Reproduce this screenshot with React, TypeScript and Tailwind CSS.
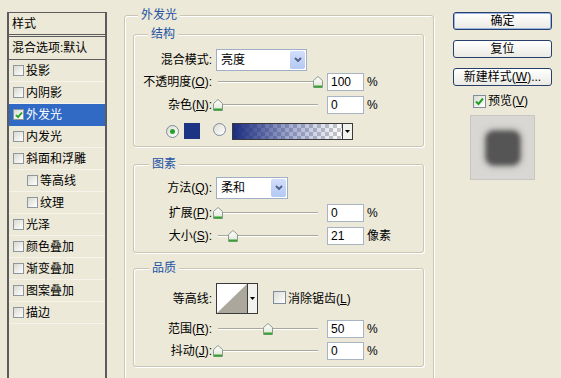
import React from "react";

function ListCheck({ checked }: { checked?: boolean }) {
  return (
    <span className="inline-flex h-[11px] w-[11px] shrink-0 items-center justify-center border border-[#8e969e] bg-gradient-to-br from-[#d9d9d2] to-white">
      {checked && (
        <svg width="8" height="8" viewBox="0 0 8 8">
          <path d="M1 4 L3 6.2 L7 1.5" fill="none" stroke="#21a121" strokeWidth="1.8" />
        </svg>
      )}
    </span>
  );
}

function Check({ checked }: { checked?: boolean }) {
  return (
    <span className="inline-flex h-[13px] w-[13px] shrink-0 items-center justify-center border border-[#7f8c99] bg-gradient-to-br from-[#dcdcd5] to-white">
      {checked && (
        <svg width="9" height="9" viewBox="0 0 9 9">
          <path d="M1 4.5 L3.5 7 L8 1.5" fill="none" stroke="#21a121" strokeWidth="2" />
        </svg>
      )}
    </span>
  );
}

function Radio({ checked }: { checked?: boolean }) {
  return (
    <span className="inline-flex h-[13px] w-[13px] shrink-0 items-center justify-center rounded-full border border-[#7f8c99] bg-gradient-to-br from-[#dcdcd5] to-white">
      {checked && <span className="h-[5px] w-[5px] rounded-full bg-[#2aa02a]" />}
    </span>
  );
}

function Thumb({ left }: { left: number }) {
  return (
    <svg
      className="absolute top-[5px]"
      style={{ left }}
      width="10"
      height="12"
      viewBox="0 0 10 12"
    >
      <defs>
        <linearGradient id="tg" x1="0" y1="0" x2="0" y2="1">
          <stop offset="0" stopColor="#ffffff" />
          <stop offset="1" stopColor="#dfe6d6" />
        </linearGradient>
      </defs>
      <path d="M0.5 11.5 V4.5 L5 0.5 L9.5 4.5 V11.5 Z" fill="url(#tg)" stroke="#8c9a8c" />
      <rect x="1" y="9.5" width="8" height="2" fill="#34a334" />
    </svg>
  );
}

function Slider({ pos }: { pos: number }) {
  return (
    <div className="relative ml-[4px] h-[22px] w-[104px] shrink-0">
      <div className="absolute left-[2px] right-[2px] top-[10px] h-[2px] border-t border-[#aaa89c] bg-white" />
      <Thumb left={pos - 3} />
    </div>
  );
}

function NumInput({ v }: { v: string }) {
  return (
    <div className="ml-[7px] flex h-[18px] w-[37px] shrink-0 items-center border border-[#a9b4c2] bg-white pl-[3px]">
      {v}
    </div>
  );
}

function Select({ text, wide }: { text: string; wide?: boolean }) {
  return (
    <div
      className={`ml-[4px] flex h-[22px] shrink-0 items-center justify-between border border-[#9fb0c4] bg-white pl-[4px] pr-[1px] ${
        wide ? "w-[91px]" : "w-[72px]"
      }`}
    >
      <span>{text}</span>
      <span className="flex h-[18px] w-[15px] items-center justify-center rounded-[2px] bg-gradient-to-b from-[#d2defb] to-[#b3c8f3]">
        <svg width="8" height="6" viewBox="0 0 8 6">
          <path d="M1 1 L4 4 L7 1" fill="none" stroke="#4d6185" strokeWidth="1.8" />
        </svg>
      </span>
    </div>
  );
}

function Label({ children }: { children: React.ReactNode }) {
  return <span className="w-[78px] shrink-0 text-right">{children}</span>;
}

function Btn({ children, def }: { children: React.ReactNode; def?: boolean }) {
  return (
    <div
      className={`flex h-[18px] w-[99px] items-center justify-center rounded-[3px] border border-[#26406b] bg-gradient-to-b from-white to-[#ebeae4] ${
        def ? "shadow-[inset_0_0_0_1px_#9ab6e4]" : ""
      }`}
    >
      {children}
    </div>
  );
}

const items: { t: string; sub?: boolean; on?: boolean }[] = [
  { t: "投影" },
  { t: "内阴影" },
  { t: "外发光", on: true },
  { t: "内发光" },
  { t: "斜面和浮雕" },
  { t: "等高线", sub: true },
  { t: "纹理", sub: true },
  { t: "光泽" },
  { t: "颜色叠加" },
  { t: "渐变叠加" },
  { t: "图案叠加" },
  { t: "描边" },
];

export default function App() {
  return (
    <div className="flex h-[378px] w-[561px] overflow-hidden bg-[#ECE9D8] font-['Liberation_Sans','Noto_Sans_CJK_SC',sans-serif] text-[12px] leading-[14px] text-black">
      {/* left list */}
      <div className="ml-[7px] mt-[12px] flex h-[380px] w-[100px] shrink-0 flex-col border-x-2 border-t border-[#5c5c5c]">
        <div className="flex h-[24px] shrink-0 items-center border-b-[3px] border-double border-[#5c5c5c] pl-[3px]">
          样式
        </div>
        <div className="flex h-[23px] shrink-0 items-center border-b border-[#5c5c5c] pl-[3px]">
          混合选项:默认
        </div>
        {items.map((it) => (
          <div
            key={it.t}
            className={`flex h-[22px] shrink-0 items-center border-b ${
              it.on ? "border-[#316AC5] bg-[#316AC5] text-white" : "border-[#f5f3ea]"
            } ${it.sub ? "pl-[18px]" : "pl-[4px]"}`}
          >
            <ListCheck checked={it.on} />
            <span className="ml-[2px]">{it.t}</span>
          </div>
        ))}
      </div>

      {/* main */}
      <div className="relative ml-[17px] mt-[15px] h-[370px] w-[310px] shrink-0 rounded-[3px] border border-[#c9c6b5] pl-[8px] pt-[18px] shadow-[1px_1px_0_#fff,inset_1px_1px_0_#fff]">
        <span className="absolute -top-[9px] left-[13px] bg-[#ECE9D8] px-[3px] leading-[16px] text-[#2352a5]">
          外发光
        </span>

        {/* 结构 */}
        <div className="relative flex h-[113px] w-[291px] flex-col rounded-[3px] border border-[#c9c6b5] pt-[14px] shadow-[1px_1px_0_#fff,inset_1px_1px_0_#fff]">
          <span className="absolute -top-[9px] left-[14px] bg-[#ECE9D8] px-[3px] leading-[16px] text-[#2352a5]">
            结构
          </span>
          <div className="flex h-[22px] items-center">
            <Label>混合模式:</Label>
            <Select text="亮度" wide />
          </div>
          <div className="flex h-[22px] items-center">
            <Label>
              不透明度(<u>O</u>):
            </Label>
            <Slider pos={100} />
            <NumInput v="100" />
            <span className="ml-[3px]">%</span>
          </div>
          <div className="mt-[1px] flex h-[22px] items-center">
            <Label>
              杂色(<u>N</u>):
            </Label>
            <Slider pos={0} />
            <NumInput v="0" />
            <span className="ml-[3px]">%</span>
          </div>
          <div className="mt-[4px] flex h-[22px] items-center pl-[32px]">
            <Radio checked />
            <span className="ml-[5px] h-[16px] w-[16px] bg-[#1b3584]" />
            <span className="ml-[13px]">
              <Radio />
            </span>
            <span className="ml-[6px] flex h-[17px] w-[121px] border border-[#3a3a3a]">
              <span className="flex-1 [background-image:linear-gradient(to_right,#1b2c7e,rgba(40,60,150,0.4)_55%,rgba(40,60,150,0)),repeating-conic-gradient(#c9c9c9_0%_25%,#ffffff_0%_50%)] [background-size:100%_100%,8px_8px]" />
              <span className="flex w-[10px] items-center justify-center border-l border-[#3a3a3a] bg-[#f2f2ef]">
                <svg width="5" height="3" viewBox="0 0 5 3">
                  <path d="M0 0 H5 L2.5 3 Z" fill="#000" />
                </svg>
              </span>
            </span>
          </div>
        </div>

        {/* 图素 */}
        <div className="relative mt-[17px] flex h-[89px] w-[291px] flex-col rounded-[3px] border border-[#c9c6b5] pt-[12px] shadow-[1px_1px_0_#fff,inset_1px_1px_0_#fff]">
          <span className="absolute -top-[9px] left-[15px] bg-[#ECE9D8] px-[3px] leading-[16px] text-[#2352a5]">
            图素
          </span>
          <div className="flex h-[22px] items-center">
            <Label>
              方法(<u>Q</u>):
            </Label>
            <Select text="柔和" />
          </div>
          <div className="mt-[3px] flex h-[22px] items-center">
            <Label>
              扩展(<u>P</u>):
            </Label>
            <Slider pos={0} />
            <NumInput v="0" />
            <span className="ml-[3px]">%</span>
          </div>
          <div className="mt-[1px] flex h-[22px] items-center">
            <Label>
              大小(<u>S</u>):
            </Label>
            <Slider pos={15} />
            <NumInput v="21" />
            <span className="ml-[3px]">像素</span>
          </div>
        </div>

        {/* 品质 */}
        <div className="relative mt-[15px] flex h-[99px] w-[291px] flex-col rounded-[3px] border border-[#c9c6b5] pt-[14px] shadow-[1px_1px_0_#fff,inset_1px_1px_0_#fff]">
          <span className="absolute -top-[9px] left-[15px] bg-[#ECE9D8] px-[3px] leading-[16px] text-[#2352a5]">
            品质
          </span>
          <div className="flex h-[31px] items-center">
            <Label>等高线:</Label>
            <span className="ml-[4px] flex h-[31px] w-[42px] shrink-0 border border-[#3a3a3a] bg-white">
              <svg width="30" height="29" viewBox="0 0 30 29" className="shrink-0">
                <path d="M0 29 L30 0 V29 Z" fill="#aca79d" />
              </svg>
              <span className="flex flex-1 items-center justify-center border-l border-[#3a3a3a] bg-[#f2f2ef]">
                <svg width="5" height="3" viewBox="0 0 5 3">
                  <path d="M0 0 H5 L2.5 3 Z" fill="#000" />
                </svg>
              </span>
            </span>
            <span className="ml-[15px]">
              <Check />
            </span>
            <span className="ml-[2px]">
              消除锯齿(<u>L</u>)
            </span>
          </div>
          <div className="mt-[4px] flex h-[22px] items-center">
            <Label>
              范围(<u>R</u>):
            </Label>
            <Slider pos={50} />
            <NumInput v="50" />
            <span className="ml-[3px]">%</span>
          </div>
          <div className="flex h-[22px] items-center">
            <Label>
              抖动(<u>J</u>):
            </Label>
            <Slider pos={0} />
            <NumInput v="0" />
            <span className="ml-[3px]">%</span>
          </div>
        </div>
      </div>

      {/* right column */}
      <div className="ml-[19px] mt-[12px] flex w-[99px] shrink-0 flex-col">
        <Btn def>确定</Btn>
        <div className="mt-[10px]">
          <Btn>复位</Btn>
        </div>
        <div className="mt-[10px]">
          <Btn>
            新建样式(<u>W</u>)...
          </Btn>
        </div>
        <div className="ml-[20px] mt-[7px] flex h-[16px] items-center">
          <Check checked />
          <span className="ml-[2px]">
            预览(<u>V</u>)
          </span>
        </div>
        <div className="ml-[17px] mt-[6px] flex h-[65px] w-[65px] items-center justify-center border border-[#c8c6c0] bg-[#d9d7d4]">
          <div className="h-[34px] w-[34px] rounded-[8px] bg-[#555555] blur-[2px] shadow-[0_0_4px_2px_rgba(70,70,70,0.45)]" />
        </div>
      </div>
    </div>
  );
}
